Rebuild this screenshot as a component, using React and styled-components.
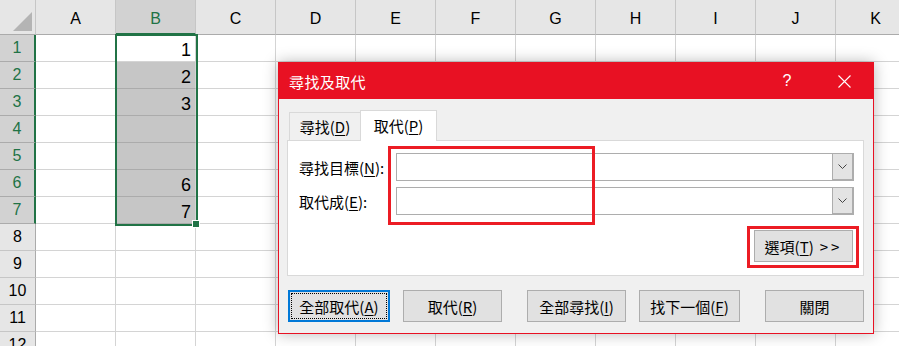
import React from "react";
import styled, { createGlobalStyle, css } from "styled-components";

const GlobalStyle = createGlobalStyle`
  html, body {
    margin: 0;
    padding: 0;
    background: #fff;
    overflow: hidden;
  }
  * {
    box-sizing: border-box;
  }
`;

const CJK = `"Noto Sans CJK TC", "Noto Sans", sans-serif`;
const GREEN = "#217346";
const RED = "#e81123";

const COLUMNS = ["A", "B", "C", "D", "E", "F", "G", "H", "I", "J", "K"];
const VALUES = { 1: "1", 2: "2", 3: "3", 6: "6", 7: "7" };
const ROWS = Array.from({ length: 12 }, (_, i) => i + 1);

const Screen = styled.div`
  position: relative;
  width: 899px;
  height: 346px;
  overflow: hidden;
  background: #fff;
`;

const Sheet = styled.div`
  display: grid;
  grid-template-columns: 36px repeat(11, 80px);
  grid-template-rows: 35px repeat(12, 27px);
  font-family: "Liberation Sans", Arial, sans-serif;
`;

const Corner = styled.div`
  display: flex;
  justify-content: flex-end;
  align-items: flex-end;
  padding: 0 3px 3px 0;
  background: #e6e6e6;
  border-right: 1px solid #c6c6c6;
  border-bottom: 1px solid #ababab;
`;

const ColHeader = styled.div`
  display: flex;
  align-items: center;
  justify-content: center;
  padding-top: 4px;
  font-size: 16px;
  color: #000;
  background: #e6e6e6;
  border-right: 1px solid #c6c6c6;
  border-bottom: 1px solid #ababab;
  ${(p) =>
    p.$selected &&
    css`
      background: #d2d2d2;
      color: ${GREEN};
      border-bottom: 2px solid ${GREEN};
    `}
`;

const RowHeader = styled.div`
  display: flex;
  align-items: center;
  justify-content: center;
  font-size: 16px;
  color: #000;
  background: #e6e6e6;
  border-right: 1px solid #ababab;
  border-bottom: 1px solid #c6c6c6;
  ${(p) =>
    p.$selected &&
    css`
      background: #d2d2d2;
      color: ${GREEN};
      border-right: 2px solid ${GREEN};
      border-bottom-color: #ababab;
    `}
`;

const Cell = styled.div`
  display: flex;
  align-items: flex-end;
  justify-content: flex-end;
  padding: 0 4px 2px 0;
  font-size: 18px;
  line-height: 18px;
  color: #000;
  border-right: 1px solid #d4d4d4;
  border-bottom: 1px solid #d4d4d4;
  ${(p) =>
    p.$shaded &&
    css`
      background: #c6c6c6;
      border-bottom-color: #ababab;
    `}
`;

const Selection = styled.div`
  position: absolute;
  left: 115px;
  top: 34px;
  width: 83px;
  height: 192px;
  border: 2px solid ${GREEN};
  pointer-events: none;
`;

const FillHandle = styled.div`
  position: absolute;
  left: 192px;
  top: 220px;
  width: 8px;
  height: 8px;
  background: ${GREEN};
  border: 1px solid #fff;
`;

/* ---------- dialog ---------- */

const Dialog = styled.div`
  position: absolute;
  left: 278px;
  top: 62px;
  width: 596px;
  height: 272px;
  display: flex;
  flex-direction: column;
  background: #f0f0f0;
  border: 1px solid ${RED};
  box-shadow: 0 0 14px rgba(0, 0, 0, 0.28);
  font-family: ${CJK};
  font-size: 15px;
  line-height: 1;
  color: #000;
`;

const TitleBar = styled.div`
  display: flex;
  align-items: center;
  height: 36px;
  padding-left: 10px;
  background: ${RED};
  color: #fff;
`;

const Title = styled.div`
  flex: 1;
  padding-top: 1px;
  letter-spacing: 0.4px;
`;

const TitleButton = styled.div`
  display: flex;
  align-items: center;
  justify-content: center;
  width: 46px;
  height: 36px;
  margin-left: ${(p) => p.$gap || 0}px;
  margin-right: ${(p) => p.$end || 0}px;
  font-family: "Liberation Sans", Arial, sans-serif;
  font-size: 16px;
  color: #fff;
`;

const Body = styled.div`
  display: flex;
  flex-direction: column;
  padding: 11px 9px 0 8px;
`;

const Tabs = styled.div`
  display: flex;
  align-items: flex-end;
  height: 31px;
  margin: 0 0 -1px 2px;
`;

const Tab = styled.div`
  display: flex;
  align-items: center;
  justify-content: center;
  width: ${(p) => p.$w}px;
  height: 29px;
  padding-bottom: 2px;
  background: #f0f0f0;
  border: 1px solid #d9d9d9;
  border-bottom: none;
  ${(p) =>
    p.$active &&
    css`
      position: relative;
      z-index: 1;
      height: 31px;
      margin-left: -1px;
      background: #fff;
    `}
`;

const Panel = styled.div`
  position: relative;
  height: 136px;
  padding: 12px 4px 0 11px;
  background: #fff;
  border: 1px solid #d9d9d9;
`;

const Fields = styled.div`
  display: grid;
  grid-template-columns: 97px 1fr;
  row-gap: 6px;
  align-items: center;
  margin-right: 5px;
`;

const Label = styled.div`
  padding-top: 1px;
`;

const Combo = styled.div`
  display: flex;
  height: 28px;
  background: #fff;
  border: 1px solid #adadad;
`;

const ComboInput = styled.div`
  flex: 1;
`;

const DropButton = styled.div`
  display: flex;
  align-items: center;
  justify-content: center;
  width: 22px;
  margin: -1px -1px -1px 0;
  background: #e3e3e3;
  border: 1px solid #adadad;
  border-right-width: 2px;
  border-bottom-width: 2px;
`;

const OptionsRow = styled.div`
  display: flex;
  justify-content: flex-end;
  margin-top: 11px;
`;

const Highlight = styled.div`
  border: 3px solid #ec1c24;
  padding: 1px 3px 3px 4px;
`;

const Annotation = styled.div`
  position: absolute;
  left: 100px;
  top: 5px;
  width: 207px;
  height: 79px;
  border: 3px solid #ec1c24;
  z-index: 2;
  pointer-events: none;
`;

const ButtonRow = styled.div`
  display: flex;
  margin: 14px 0 0 1px;
`;

const Button = styled.div`
  position: relative;
  display: flex;
  align-items: center;
  justify-content: center;
  width: ${(p) => p.$w || 99}px;
  height: 32px;
  margin-left: ${(p) => p.$gap || 0}px;
  padding-top: 1px;
  background: #e1e1e1;
  border: 1px solid #adadad;
  white-space: pre;
  ${(p) =>
    p.$focused &&
    css`
      border: 2px solid #0078d7;
      &::after {
        content: "";
        position: absolute;
        inset: 1px;
        border: 1px dotted #000;
      }
    `}
`;

const Arrows = styled.span`
  margin-left: 6px;
  letter-spacing: 3px;
`;

const Key = styled.u`
  text-underline-offset: 2px;
`;

const CornerTriangle = () => (
  <svg width="19" height="19" viewBox="0 0 19 19">
    <polygon points="19,0 19,19 0,19" fill="#b4b4b4" />
  </svg>
);

const CloseIcon = () => (
  <svg width="13" height="13" viewBox="0 0 13 13">
    <path d="M0.5 0.5 L12.5 12.5 M12.5 0.5 L0.5 12.5" stroke="#fff" strokeWidth="1.1" />
  </svg>
);

const Chevron = () => (
  <svg width="9" height="5" viewBox="0 0 9 5">
    <path d="M0.5 0.5 L4.5 4.5 L8.5 0.5" stroke="#444" strokeWidth="1" fill="none" />
  </svg>
);

const App = () => {
  return (
    <Screen>
      <GlobalStyle />
      <Sheet>
        <Corner>
          <CornerTriangle />
        </Corner>
        {COLUMNS.map((c) => (
          <ColHeader key={c} $selected={c === "B"}>
            {c}
          </ColHeader>
        ))}
        {ROWS.map((r) => (
          <React.Fragment key={r}>
            <RowHeader $selected={r <= 7}>{r}</RowHeader>
            {COLUMNS.map((c) => (
              <Cell key={c} $shaded={c === "B" && r >= 2 && r <= 7}>
                {c === "B" ? VALUES[r] : null}
              </Cell>
            ))}
          </React.Fragment>
        ))}
      </Sheet>
      <Selection />
      <FillHandle />

      <Dialog>
        <TitleBar>
          <Title>尋找及取代</Title>
          <TitleButton>?</TitleButton>
          <TitleButton $gap={11} $end={6}>
            <CloseIcon />
          </TitleButton>
        </TitleBar>
        <Body>
          <Tabs>
            <Tab $w={72}>
              尋找(<Key>D</Key>)
            </Tab>
            <Tab $w={77} $active>
              取代(<Key>P</Key>)
            </Tab>
          </Tabs>
          <Panel>
            <Annotation />
            <Fields>
              <Label>
                尋找目標(<Key>N</Key>):
              </Label>
              <Combo>
                <ComboInput />
                <DropButton>
                  <Chevron />
                </DropButton>
              </Combo>
              <Label>
                取代成(<Key>E</Key>):
              </Label>
              <Combo>
                <ComboInput />
                <DropButton>
                  <Chevron />
                </DropButton>
              </Combo>
            </Fields>
            <OptionsRow>
              <Highlight>
                <Button>
                  選項(<Key>T</Key>)<Arrows>{">>"}</Arrows>
                </Button>
              </Highlight>
            </OptionsRow>
          </Panel>
          <ButtonRow>
            <Button $w={102} $focused>
              全部取代(<Key>A</Key>)
            </Button>
            <Button $gap={13}>
              取代(<Key>R</Key>)
            </Button>
            <Button $gap={25}>
              全部尋找(<Key>I</Key>)
            </Button>
            <Button $gap={13} $w={101}>
              找下一個(<Key>F</Key>)
            </Button>
            <Button $gap={25}>關閉</Button>
          </ButtonRow>
        </Body>
      </Dialog>
    </Screen>
  );
};

export default App;
